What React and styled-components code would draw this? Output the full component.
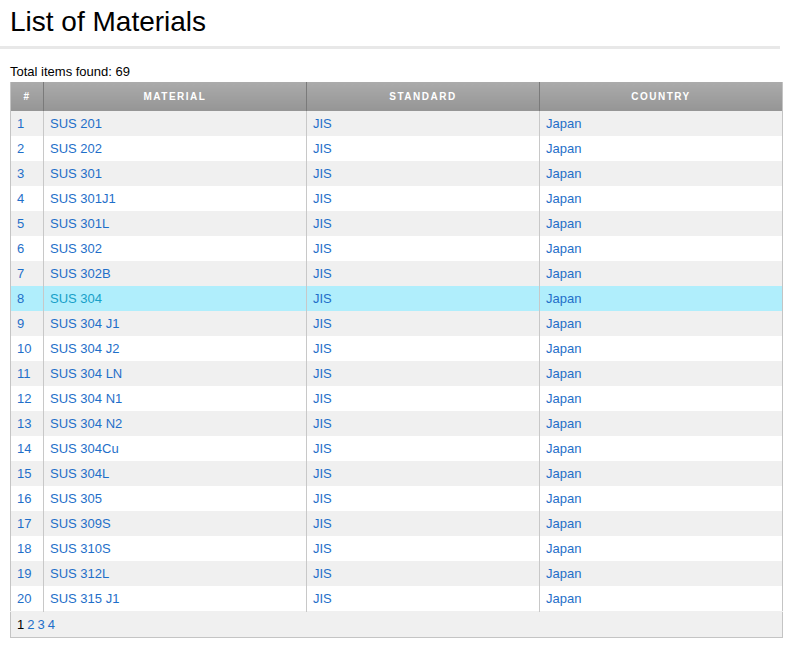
import React from "react";
import styled, { createGlobalStyle } from "styled-components";

const GlobalStyle = createGlobalStyle`
  body { margin: 0; font-family: "Liberation Sans", Arial, sans-serif; background: #fff; }
`;

const materials = ["SUS 201","SUS 202","SUS 301","SUS 301J1","SUS 301L","SUS 302","SUS 302B","SUS 304","SUS 304 J1","SUS 304 J2","SUS 304 LN","SUS 304 N1","SUS 304 N2","SUS 304Cu","SUS 304L","SUS 305","SUS 309S","SUS 310S","SUS 312L","SUS 315 J1"];

const Page = styled.div`padding: 0 10px 0 0;`;
const Title = styled.h1`
  margin: 0; padding: 6px 10px 0; font-weight: normal; font-size: 28px; line-height: 32px; color: #000;
`;
const Rule = styled.hr`
  margin: 8px 0 0; width: 780px; border: 0; border-top: 3px solid #e8e8e8;
`;
const Total = styled.div`
  font-size: 13px; padding: 15px 10px 3px; color: #000; line-height: 15px;
`;
const Table = styled.table`
  margin-left: 10px; width: 773px; border-collapse: collapse; font-size: 13px;
  border: 1px solid #c4c4c4; border-top: 0;
`;
const Th = styled.th`
  height: 29px; padding: 0; background: linear-gradient(#ababab, #959595);
  color: #fff; font-size: 10px; letter-spacing: 1.5px; font-weight: bold;
  border-left: 1px solid #7a7a7a; width: ${(p) => p.$w}px;
  &:first-child { border-left: 0; }
`;
const Row = styled.tr`
  background: ${(p) => (p.$hover ? "#b0eefc" : p.$odd ? "#f0f0f0" : "#fff")};
`;
const Td = styled.td`
  height: 25px; padding: 0 6px; border-left: 1px solid #c8c8c8;
  color: ${(p) => (p.$hover ? "#17a0c8" : "#1f6fc9")};
  &:first-child { border-left: 0; color: #1f6fc9; }
`;
const Pager = styled.td`
  height: 25px; padding: 0 6px; background: #f0f0f0; font-size: 13px;
  border-top: 1px solid #f0f0f0;
  span { color: #000; } a { color: #1f6fc9; text-decoration: none; margin-left: 3px; }
`;

export default function App() {
  return (
    <Page>
      <GlobalStyle />
      <Title>List of Materials</Title>
      <Rule />
      <Total>Total items found: 69</Total>
      <Table>
        <thead>
          <tr>
            <Th $w={32}>#</Th>
            <Th $w={262}>MATERIAL</Th>
            <Th $w={232}>STANDARD</Th>
            <Th>COUNTRY</Th>
          </tr>
        </thead>
        <tbody>
          {materials.map((m, i) => (
            <Row key={m} $odd={i % 2 === 0} $hover={i === 7}>
              <Td>{i + 1}</Td>
              <Td $hover={i === 7}>{m}</Td>
              <Td>JIS</Td>
              <Td>Japan</Td>
            </Row>
          ))}
          <tr>
            <Pager colSpan={4}>
              <span>1</span><a>2</a><a>3</a><a>4</a>
            </Pager>
          </tr>
        </tbody>
      </Table>
    </Page>
  );
}
